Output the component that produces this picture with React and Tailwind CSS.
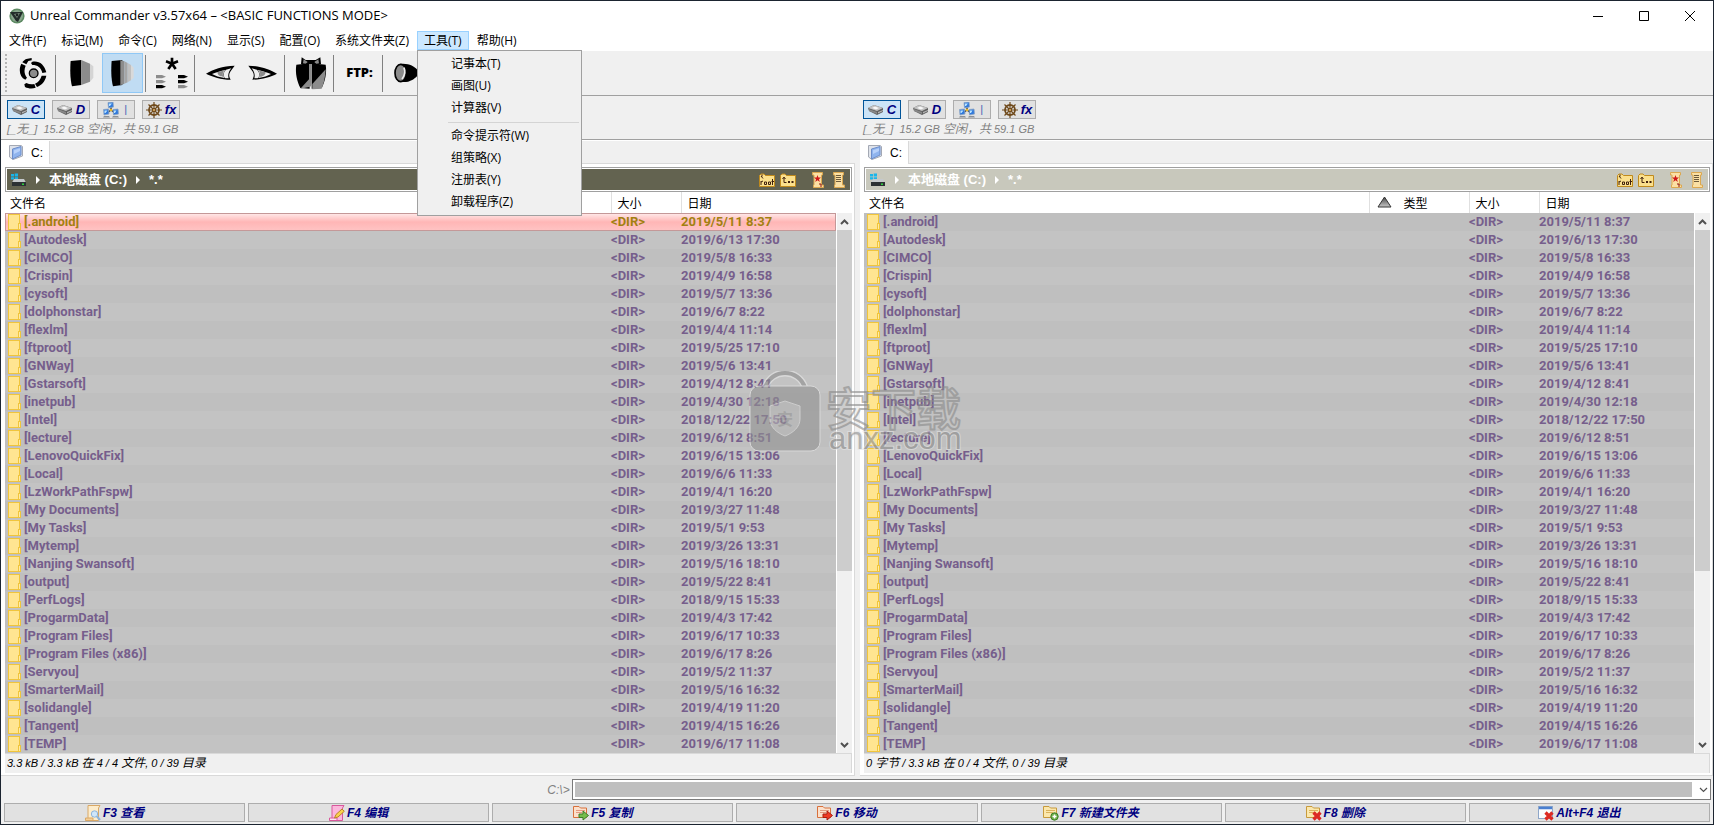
import React, { useState } from 'react';

const MENUS = ['文件(F)', '标记(M)', '命令(C)', '网络(N)', '显示(S)', '配置(O)', '系统文件夹(Z)', '工具(T)', '帮助(H)'];

const TOOL_ITEMS = ['记事本(T)', '画图(U)', '计算器(V)', '-', '命令提示符(W)', '组策略(X)', '注册表(Y)', '卸载程序(Z)'];

const FILES = [
  ['.android', '2019/5/11 8:37'],
  ['Autodesk', '2019/6/13 17:30'],
  ['CIMCO', '2019/5/8 16:33'],
  ['Crispin', '2019/4/9 16:58'],
  ['cysoft', '2019/5/7 13:36'],
  ['dolphonstar', '2019/6/7 8:22'],
  ['flexlm', '2019/4/4 11:14'],
  ['ftproot', '2019/5/25 17:10'],
  ['GNWay', '2019/5/6 13:41'],
  ['Gstarsoft', '2019/4/12 8:41'],
  ['inetpub', '2019/4/30 12:18'],
  ['Intel', '2018/12/22 17:50'],
  ['lecture', '2019/6/12 8:51'],
  ['LenovoQuickFix', '2019/6/15 13:06'],
  ['Local', '2019/6/6 11:33'],
  ['LzWorkPathFspw', '2019/4/1 16:20'],
  ['My Documents', '2019/3/27 11:48'],
  ['My Tasks', '2019/5/1 9:53'],
  ['Mytemp', '2019/3/26 13:31'],
  ['Nanjing Swansoft', '2019/5/16 18:10'],
  ['output', '2019/5/22 8:41'],
  ['PerfLogs', '2018/9/15 15:33'],
  ['ProgarmData', '2019/4/3 17:42'],
  ['Program Files', '2019/6/17 10:33'],
  ['Program Files (x86)', '2019/6/17 8:26'],
  ['Servyou', '2019/5/2 11:37'],
  ['SmarterMail', '2019/5/16 16:32'],
  ['solidangle', '2019/4/19 11:20'],
  ['Tangent', '2019/4/15 16:26'],
  ['TEMP', '2019/6/17 11:08'],
];

/* ---------- toolbar icons ---------- */

const ApertureIcon = () => (
  <svg width="28" height="32" viewBox="0 0 84 96">
    <path d="M22 6L38 3V10L28 12L22 22L10 16C13 12 17 8 22 6Z" />
    <path d="M7 20L20 26C14 40 16 52 24 62L19 68C2 60 -2 38 7 20Z" />
    <path d="M40 14C60 10 76 22 82 46L70 48C66 32 56 24 40 24L36 18Z" />
    <path d="M82 56C78 74 68 84 54 90L48 80C58 76 64 68 68 56Z" />
    <path d="M50 92C40 96 28 95 18 90L16 82L22 78C30 82 38 83 46 81Z" />
    <circle cx="44" cy="49" r="13" fill="#8c8c8c" stroke="#000" strokeWidth="4" />
  </svg>
);

const LensIcon = ({ striped }) => (
  <svg width="24" height="28" viewBox="0 0 72 84">
    <path d="M2 6L34 3V78L6 82C0 60 0 28 2 6Z" />
    {striped ? (
      <>
        <path d="M28 4L40 7V74L28 79Z" fill="#8c8c8c" />
        <path d="M40 7L50 12V70L40 74Z" fill="#a6a6a6" />
        <path d="M50 12L60 18V64L50 70Z" fill="#c0c0c0" />
        <path d="M60 18L68 26V56L60 64Z" fill="#d9d9d9" />
      </>
    ) : (
      <>
        <path d="M34 3L60 14V68L34 78Z" fill="#8c8c8c" />
        <path d="M60 14L70 22V56L60 68Z" fill="#d4d4d4" />
      </>
    )}
  </svg>
);

const SelectIcon = () => (
  <svg width="32" height="32" viewBox="0 0 96 96">
    <path d="M48 20V2M48 20L30 13M48 20L66 13M48 20L37 36M48 20L59 36" stroke="#000" strokeWidth="8" fill="none" />
    <path d="M0 54H18L30 59L18 64H0Z" fill="#8c8c8c" />
    <path d="M0 69H18L30 74L18 79H0Z" fill="#8c8c8c" />
    <path d="M0 84H18L30 89L18 94H0Z" />
    <path d="M66 54H84L96 59L84 64H66Z" />
    <path d="M66 69H84L96 74L84 79H66Z" />
    <path d="M66 84H84L96 89L84 94H66Z" fill="#8c8c8c" />
  </svg>
);

const EyeIcon = ({ flip }) => (
  <svg width="30" height="16" viewBox="0 0 90 48" className={flip ? '-scale-x-100' : ''}>
    <path d="M0 26C20 14 50 2 86 2L76 16C68 26 68 34 74 44C46 44 20 36 0 26Z" />
    <path d="M18 27C32 22 44 18 58 15C50 24 50 32 56 39C40 37 28 33 18 27Z" fill="#f0f0f0" />
    <path d="M34 22L56 16C48 24 50 32 54 36C44 36 36 32 34 22Z" fill="#8c8c8c" />
    <path d="M60 14L76 10C66 22 66 32 68 40H58C50 32 52 22 60 14Z" fill="#f0f0f0" />
  </svg>
);

const BeetleIcon = () => (
  <svg width="32" height="34" viewBox="0 0 96 102">
    <path d="M20 4L32 12H62L76 4L78 24H18Z" />
    <path d="M26 10L38 18L32 24L24 22ZM70 10L58 18L64 24L72 22Z" fill="#8c8c8c" />
    <path d="M4 26L42 22L44 98L16 96C6 76 0 50 4 26Z" />
    <path d="M50 22L92 26C96 50 90 76 80 96L50 98Z" />
    <path d="M92 40C90 66 86 84 80 98L52 100V84Z" fill="#8c8c8c" />
    <path d="M42 24L50 24V86L46 92L16 98L42 70Z" fill="#8c8c8c" />
  </svg>
);

const TorchIcon = () => (
  <svg width="30" height="20" viewBox="0 0 90 60">
    <path d="M18 3C44 0 60 10 70 20L86 22V38L70 38C58 52 42 60 18 56Z" />
    <ellipse cx="20" cy="30" rx="17" ry="26" fill="#8c8c8c" stroke="#000" strokeWidth="5" />
    <path d="M30 14C34 24 32 38 24 48" fill="none" stroke="#f0f0f0" strokeWidth="5" />
  </svg>
);

/* ---------- small icons ---------- */

const AppIcon = () => (
  <svg width="16" height="16" viewBox="0 0 16 16">
    <circle cx="8" cy="8" r="7.6" fill="#5d8a63" />
    <circle cx="8" cy="8" r="6" fill="#88a68c" />
    <path d="M1 4L14 4L9 14L7 13Z" fill="#222c2a" />
    <path d="M5 6L11 5L8 10Z" fill="#7d9180" />
    <circle cx="8" cy="7" r="1.4" fill="#1c2222" />
  </svg>
);

const DriveIcon = () => (
  <svg width="16" height="12" viewBox="0 0 16 12">
    <path d="M0 4L6 1L15 4V8L9 11L1 7Z" fill="#5f5f5f" />
    <path d="M0 4L6 1L15 4L9 7Z" fill="#c2c2c2" />
    <path d="M4 4L7 2.4L11 4L8 5.5Z" fill="#f8f8f8" />
    <path d="M1 5L9 8V10L1 7Z" fill="#888" />
    <path d="M10 8L15 6V7L10 9.4Z" fill="#b5b5b5" />
  </svg>
);

const NetworkIcon = () => (
  <svg width="16" height="16" viewBox="0 0 16 16">
    <path d="M8 5V9M8 8L4 11M8 8L12 11" stroke="#3a3a3a" strokeWidth="1.4" />
    <path d="M5 0.5L10 0L10.5 5L5.5 6Z" fill="#2f78dc" stroke="#8aa4c4" strokeWidth="0.8" />
    <path d="M0.5 7.5L5.5 7L6 12L1 13Z" fill="#2f78dc" stroke="#8aa4c4" strokeWidth="0.8" />
    <path d="M10 7.5L15 7L15.5 12L10.5 13Z" fill="#2f78dc" stroke="#8aa4c4" strokeWidth="0.8" />
    <path d="M6 1.5H9L7 4H6ZM1.5 8.5H4.5L2.5 11H1.5ZM11 8.5H13.5L12 11H11Z" fill="#b9e4ff" />
    <path d="M1 14H6L7 15.5H0ZM10 14H15L16 15.5H9Z" fill="#8b9096" />
    <circle cx="8" cy="8" r="1.3" fill="#e8b820" />
  </svg>
);

const WheelIcon = () => (
  <svg width="16" height="16" viewBox="0 0 16 16" fill="none" stroke="#6f4a1c">
    <path d="M8 0V16M0 8H16M2.5 2.5L13.5 13.5M13.5 2.5L2.5 13.5" strokeWidth="1.2" />
    <circle cx="8" cy="8" r="5" strokeWidth="1.8" />
    <circle cx="8" cy="8" r="1.6" fill="#d8a860" />
  </svg>
);

const TabFolderIcon = () => (
  <svg width="14" height="15" viewBox="0 0 14 15">
    <path d="M0.5 0.5H12L13.5 1.5V11L4 14.5L0.5 12Z" fill="#dfe3ea" stroke="#a4a9b4" />
    <path d="M3.5 4L12 1.5V10L3.5 14Z" fill="#8fb4ee" stroke="#6d8ecb" />
    <path d="M5 5.2L11 3.2V6L5 9Z" fill="#b7d1fa" />
  </svg>
);

const SystemDriveIcon = () => (
  <svg width="16" height="14" viewBox="0 0 16 14">
    <path d="M0 1H3V3.5H0ZM3.7 0.6H7V3.5H3.7ZM0 4.2H3V6.6H0ZM3.7 4.2H7V7H3.7Z" fill="#19b5ea" />
    <path d="M3 6H13L15 9.5H1Z" fill="#c5c9cc" />
    <rect x="1" y="9" width="14" height="4" fill="#2c3134" />
    <rect x="11" y="10.5" width="2" height="1.4" fill="#30e040" />
  </svg>
);

const RootFolderIcon = () => (
  <svg width="16" height="14" viewBox="0 0 16 14">
    <path d="M0.5 2.5L2 1H5L6.5 2.5H15.5V13.5H0.5Z" fill="#fbe08c" stroke="#c08a1c" />
    <path d="M3 1.5V3.5M2 8V12M2 9L4 8M5.5 9H7.5V11.5H5.5ZM9.5 9H11.5V11.5H9.5ZM13.5 6V12M12.5 8.5H15" fill="none" stroke="#40200c" />
    <path d="M2 3L4 5.5" stroke="#40200c" />
  </svg>
);

const UpFolderIcon = () => (
  <svg width="16" height="14" viewBox="0 0 16 14">
    <path d="M0.5 2.5L2 1H5L6.5 2.5H15.5V13.5H0.5Z" fill="#fbe08c" stroke="#c08a1c" />
    <path d="M4 4V9.5H6.5M2.5 6L4 4.2L5.5 6" fill="none" stroke="#40200c" />
    <path d="M8 8H10V10H8ZM11.5 8H13.5V10H11.5Z" fill="#40200c" />
  </svg>
);

const ScrollIcon = ({ star }) => (
  <svg width="12" height="16" viewBox="0 0 12 16">
    <path d="M0.5 0.5H10.5V3H9.5V13H11.5V15.5H1.5V13H2V3H0.5Z" fill="#fbe0a4" stroke="#dca850" />
    {star ? (
      <>
        <path d="M5.5 3L6.4 5.6H9L7 7.2L7.8 10L5.5 8.3L3.3 10L4 7.2L2 5.6H4.6Z" fill="#d01818" />
        <path d="M7 12H9V15" fill="none" stroke="#901010" />
      </>
    ) : (
      <path d="M3 3.5H8M3 5.5H8M3 7.5H8M3 9.5H8" stroke="#6d5a3a" />
    )}
  </svg>
);

const FolderIcon = () => (
  <svg width="13" height="16" viewBox="0 0 13 16" className="block">
    <rect x="0.5" y="0.5" width="11" height="15" fill="#ffe591" stroke="#f0c53c" />
    <rect x="10.5" y="9.5" width="2" height="6" fill="#ffeaa4" stroke="#f0c53c" />
  </svg>
);

const SortIcon = () => (
  <svg width="15" height="12" viewBox="0 0 15 12" className="mb-1">
    <defs>
      <linearGradient id="sort" x1="0" y1="0" x2="0" y2="1">
        <stop offset="0" stopColor="#444" />
        <stop offset="1" stopColor="#c8c8c8" />
      </linearGradient>
    </defs>
    <path d="M7.5 1L14 11H1Z" fill="url(#sort)" stroke="#333" />
  </svg>
);

const Chevron = ({ up, thin }) => (
  <svg width="9" height="6" viewBox="0 0 9 6" className={up ? 'rotate-180' : ''}>
    <path d="M1 1L4.5 4.5L8 1" fill="none" stroke="#505050" strokeWidth={thin ? 1.2 : 2} />
  </svg>
);

const KeyIcon = ({ kind }) => (
  <svg width="16" height="16" viewBox="0 0 16 16">
    {kind === 'view' && (
      <>
        <path d="M3 0.5H15L13.5 3V15.5H1L3 12.5Z" fill="#fdeccb" stroke="#d9a866" />
        <path d="M0.5 13H8V15.5H0.5Z" fill="#f4cf98" stroke="#d9a866" />
        <circle cx="9.5" cy="9" r="3.2" fill="#cfe6fa" stroke="#8db4dc" />
        <path d="M12 11.5L15 15" stroke="#8db4dc" strokeWidth="2" />
      </>
    )}
    {kind === 'edit' && (
      <>
        <path d="M3 0.5H15L13.5 3V15.5H1L3 12.5Z" fill="#fbb7dc" stroke="#d8589c" />
        <path d="M0.5 13H8V15.5H0.5Z" fill="#fde4f0" stroke="#d8589c" />
        <path d="M5.5 13L7 9.5L13 4L15.3 6.3L9 12Z" fill="#f9d24c" stroke="#b98424" />
      </>
    )}
    {(kind === 'copy' || kind === 'move') && (
      <>
        <path d="M0.5 1.5H6L7.5 3H13.5V12.5H0.5Z" fill="#fbe0cc" stroke="#d8703c" />
        <path d="M3 5.5H12M3 7.5H9" stroke="#e39a80" />
        <path
          d="M6 9H10V6L15.5 10.5L10 15V12.5H6Z"
          fill={kind === 'copy' ? '#74bd4c' : '#ee3a24'}
          stroke={kind === 'copy' ? '#3d7d28' : '#a81c10'}
        />
      </>
    )}
    {(kind === 'mkdir' || kind === 'delete') && (
      <>
        <path d="M0.5 1.5H6L7.5 3H13.5V12.5H0.5Z" fill="#fbe7ac" stroke="#c79a3c" />
        <path d="M3 5.5H12M3 7.5H10" stroke="#d9b25c" />
      </>
    )}
    {kind === 'mkdir' && (
      <>
        <circle cx="11.5" cy="11.5" r="3.7" fill="#6cae48" stroke="#3d7d28" />
        <path d="M11.5 9.5V13.5M9.5 11.5H13.5" stroke="#fff" strokeWidth="1.5" />
      </>
    )}
    {kind === 'exit' && (
      <>
        <rect x="0.5" y="1.5" width="14" height="12" fill="#fafcff" stroke="#8ea6c8" />
        <path d="M1 3H14" stroke="#4a7fd0" strokeWidth="2.5" />
      </>
    )}
    {(kind === 'delete' || kind === 'exit') && (
      <path d="M7.5 7.5L14.5 14.5M14.5 7.5L7.5 14.5" stroke="#dc2a24" strokeWidth="3.2" />
    )}
  </svg>
);

/* ---------- toolbar ---------- */

const ToolButton = ({ label, pressed, children }) => (
  <button
    type="button"
    aria-label={label}
    className={`flex h-10 w-[41px] shrink-0 items-center justify-center border ${
      pressed ? 'border-[#90c8f6] bg-[#c0dcf3]' : 'border-transparent'
    }`}
  >
    {children}
  </button>
);

const ToolSeparator = () => (
  <div className="w-2 shrink-0 pl-0.5">
    <div className="h-[37px] w-px bg-[#808080]" />
  </div>
);

const Toolbar = () => (
  <div className="flex h-[45px] items-center border-t border-white bg-[#f0f0f0] pl-1">
    <div className="mr-[5px] h-[38px] border-l-2 border-dotted border-[#b4b4b4]" />
    <ToolButton label="刷新"><ApertureIcon /></ToolButton>
    <ToolSeparator />
    <ToolButton label="简要"><LensIcon /></ToolButton>
    <ToolButton label="详细" pressed><LensIcon striped /></ToolButton>
    <ToolSeparator />
    <ToolButton label="选择"><SelectIcon /></ToolButton>
    <ToolSeparator />
    <ToolButton label="后退"><EyeIcon /></ToolButton>
    <ToolButton label="前进"><EyeIcon flip /></ToolButton>
    <ToolSeparator />
    <ToolButton label="打包"><BeetleIcon /></ToolButton>
    <ToolSeparator />
    <ToolButton label="FTP">
      <span className="font-['Open_Sans',sans-serif] text-[13px] font-extrabold">FTP:</span>
    </ToolButton>
    <ToolSeparator />
    <ToolButton label="搜索"><TorchIcon /></ToolButton>
  </div>
);

/* ---------- panes ---------- */

// Latin runs are set one size smaller than the Chinese ones
const MixedText = ({ text }) =>
  text.split(/([\u3000-\u9fff\uff00-\uffef]+)/).map((part, i) => (
    <span key={i} className={i % 2 ? 'text-xs' : 'text-[11px]'}>{part}</span>
  ));

const DriveButton = ({ label, active, children }) => (
  <button
    type="button"
    className={`flex h-[19px] w-[38px] items-center justify-center gap-[3px] border text-[13px] font-bold italic text-[#000080] ${
      active ? 'border-[#005499] bg-[#cce4f7]' : 'border-[#adadad] bg-[#e1e1e1]'
    }`}
  >
    {children}
    <span className={label === '|' ? 'w-2 text-[10px] font-normal text-[#3058b0]' : ''}>{label}</span>
  </button>
);

const DriveBar = () => (
  <div className="h-[43px] px-[6px] pt-1 pb-1">
    <div className="flex gap-[7px]">
      <DriveButton label="C" active><DriveIcon /></DriveButton>
      <DriveButton label="D"><DriveIcon /></DriveButton>
      <DriveButton label="|"><NetworkIcon /></DriveButton>
      <DriveButton label="fx"><WheelIcon /></DriveButton>
    </div>
    <p className="text-xs leading-5 whitespace-pre text-[#808080] italic">
      <MixedText text="[_无_]  15.2 GB 空闲，共 59.1 GB" />
    </p>
  </div>
);

const PathBar = ({ active }) => (
  <div className="border border-[#a0a0a0] bg-white p-px">
    <div className={`flex h-[21px] items-center pr-[5px] pl-1 text-[13px] font-bold text-white ${active ? 'bg-[#636350]' : 'bg-[#c8c8bc]'}`}>
      <SystemDriveIcon />
      <span className="ml-[9px] h-0 w-0 border-y-4 border-l-4 border-y-transparent border-l-white" />
      <span className="ml-[9px] whitespace-nowrap">本地磁盘 (C:)</span>
      <span className="ml-[9px] h-0 w-0 border-y-4 border-l-4 border-y-transparent border-l-white" />
      <span className="ml-[9px]">*.*</span>
      <div className="ml-auto flex items-center">
        <button type="button" aria-label="根目录"><RootFolderIcon /></button>
        <button type="button" aria-label="上级目录" className="ml-[5px]"><UpFolderIcon /></button>
        <button type="button" aria-label="收藏" className="ml-4"><ScrollIcon star /></button>
        <button type="button" aria-label="历史" className="ml-[9px]"><ScrollIcon /></button>
      </div>
    </div>
  </div>
);

const FileTable = ({ active }) => (
  <div className="flex flex-1">
    <table className="min-w-0 flex-1 table-fixed border-collapse text-left">
      <colgroup>
        <col />
        <col className="w-[100px]" />
        <col className="w-[70px]" />
        <col className="w-[155px]" />
      </colgroup>
      <thead className="bg-white text-xs text-black">
        <tr className="h-[21px] leading-[18px]">
          <th className="p-0 pt-[3px] pl-[5px] font-normal">文件名</th>
          <th className="border-l border-[#e0e0e0] p-0 pt-[3px] font-normal">
            <span className="flex items-center gap-3 pl-[7px]">
              <SortIcon />
              类型
            </span>
          </th>
          <th className="border-l border-[#e0e0e0] p-0 pt-[3px] pl-[6px] font-normal">大小</th>
          <th className="border-l border-[#e0e0e0] p-0 pt-[3px] pl-[6px] font-normal">日期</th>
        </tr>
      </thead>
      <tbody className="font-['Roboto','Liberation_Sans',sans-serif] text-[13px] font-bold text-[#765e8c]">
        {FILES.map(([name, date], i) => {
          const selected = active && i === 0;
          let look = i % 2 ? 'bg-[#c3c3c3]' : 'bg-[#bfbfbf]';
          if (selected) {
            look = 'bg-linear-to-b from-[#ffecec] via-[#ffb6b6] to-[#ffc4c4] text-[#a28010] outline -outline-offset-1 outline-[#c49898]';
          }
          return (
            <tr key={name} className={`h-[18px] leading-[16px] ${look}`}>
              <td className="p-0 pl-[3px]">
                <span className="flex items-center gap-[3px]">
                  <FolderIcon />
                  [{name}]
                </span>
              </td>
              <td className="p-0" />
              <td className="p-0">&lt;DIR&gt;</td>
              <td className="p-0">{date}</td>
            </tr>
          );
        })}
      </tbody>
    </table>
    <div className="flex w-4 flex-col">
      <div className="h-[21px] bg-white" />
      <div className="flex flex-1 flex-col items-center border-l border-white bg-[#f0f0f0]">
        <button type="button" aria-label="向上滚动" className="flex h-[17px] items-center"><Chevron up /></button>
        <div className="h-[341px] w-full bg-[#cdcdcd]" />
        <button type="button" aria-label="向下滚动" className="mt-auto flex h-[17px] items-center"><Chevron /></button>
      </div>
    </div>
  </div>
);

const Pane = ({ active, status }) => (
  <section className="flex min-w-0 flex-col">
    <div className="flex h-[23px] items-stretch">
      <button type="button" className="flex w-12 items-center gap-2 bg-white pl-2 text-xs">
        <TabFolderIcon />
        C:
      </button>
      <div className="flex-1 border-b border-l border-[#d9d9d9]" />
    </div>
    <div className="flex flex-1 flex-col border-r border-b border-[#d9d9d9] bg-white pt-[3px] pr-0.5 pb-0.5 pl-1">
      <PathBar active={active} />
      <FileTable active={active} />
      <p className="h-5 border-t border-r border-[#d9d9d9] bg-[#f0f0f0] pl-0.5 text-xs leading-[18px] text-black italic">
        <MixedText text={status} />
      </p>
    </div>
  </section>
);

/* ---------- menu ---------- */

const MenuBar = ({ open, setOpen }) => (
  <nav className="flex h-[19px] gap-px bg-white pl-px font-['Open_Sans','Noto_Sans_CJK_SC',sans-serif] text-xs">
    {MENUS.map((title) => (
      <div key={title} className="relative">
        <button
          type="button"
          onClick={() => setOpen(open === title ? null : title)}
          className={`flex h-[19px] items-center border px-1.5 whitespace-nowrap ${
            open === title ? 'border-[#99d1ff] bg-[#cce8ff]' : 'border-transparent'
          }`}
        >
          {title}
        </button>
        {open === title && title === '工具(T)' && (
          <div className="absolute top-[19px] left-0 z-20 w-[165px] border border-[#a0a0a0] bg-[#f0f0f0] py-0.5">
            {TOOL_ITEMS.map((item) =>
              item === '-' ? (
                <div key={item} className="mr-0.5 ml-[30px] flex h-1.5 items-center">
                  <div className="h-px w-full bg-[#d4d4d4]" />
                </div>
              ) : (
                <button key={item} type="button" className="block h-[22px] w-full pl-[33px] text-left">
                  {item}
                </button>
              )
            )}
          </div>
        )}
      </div>
    ))}
  </nav>
);

const KEYS = [
  ['view', 'F3 查看'],
  ['edit', 'F4 编辑'],
  ['copy', 'F5 复制'],
  ['move', 'F6 移动'],
  ['mkdir', 'F7 新建文件夹'],
  ['delete', 'F8 删除'],
  ['exit', 'Alt+F4 退出'],
];

const Watermark = () => (
  <svg
    width="220"
    height="84"
    viewBox="0 0 220 84"
    className="pointer-events-none absolute top-[370px] left-[747px] z-10 opacity-60"
  >
    <path d="M17 17C23 -3 51 -3 57 17" fill="none" stroke="#e8e8e8" strokeWidth="7" />
    <path d="M17 17C23 -3 51 -3 57 17" fill="none" stroke="#8e8e8e" strokeWidth="4" />
    <rect x="2" y="15" width="70" height="65" rx="9" fill="#919191" stroke="#e8e8e8" />
    <path d="M37 30L52 35V48C52 56 45 62 37 65C29 62 22 56 22 48V35Z" fill="#b4b4b4" stroke="#d6d6d6" />
    <text x="37" y="54" textAnchor="middle" fontSize="16" fontWeight="700" fill="#919191">安</text>
    <text
      x="78"
      y="55"
      fontSize="45"
      fontWeight="500"
      fill="none"
      stroke="#8a8a8a"
      strokeWidth="2"
      strokeLinejoin="round"
    >
      安下载
    </text>
    <text x="81" y="78" fontSize="31" fill="#8a8a8a" stroke="#e4e4e4" strokeWidth="2" className="[paint-order:stroke]">
      anxz.com
    </text>
  </svg>
);

const App = () => {
  const [openMenu, setOpenMenu] = useState('工具(T)');

  return (
    <div className="relative flex min-h-screen flex-col border border-[#1b2430] bg-[#f0f0f0] font-['Liberation_Sans','Noto_Sans_CJK_SC',sans-serif] text-black">
      <header className="flex h-[30px] items-center bg-white pl-2">
        <AppIcon />
        <h1 className="ml-[5px] font-['Open_Sans',sans-serif] text-[13px]">Unreal Commander v3.57x64 – &lt;BASIC FUNCTIONS MODE&gt;</h1>
        <div className="ml-auto flex h-full">
          <button type="button" aria-label="最小化" className="flex w-[46px] items-center justify-center">
            <svg width="10" height="10" viewBox="0 0 10 10"><path d="M0 5.5H10" stroke="#000" /></svg>
          </button>
          <button type="button" aria-label="最大化" className="flex w-[46px] items-center justify-center">
            <svg width="10" height="10" viewBox="0 0 10 10"><path d="M0.5 0.5H9.5V9.5H0.5Z" fill="none" stroke="#000" /></svg>
          </button>
          <button type="button" aria-label="关闭" className="flex w-[46px] items-center justify-center">
            <svg width="10" height="10" viewBox="0 0 10 10"><path d="M0 0L10 10M10 0L0 10" stroke="#000" /></svg>
          </button>
        </div>
      </header>

      <MenuBar open={openMenu} setOpen={setOpenMenu} />
      <Toolbar />

      <div className="grid grid-cols-2 border-y border-[#a0a0a0]">
        <DriveBar />
        <DriveBar />
      </div>

      <main className="grid flex-1 grid-cols-[854fr_5px_853fr] border-t border-white">
        <Pane active status="3.3 kB / 3.3 kB 在 4 / 4 文件, 0 / 39 目录" />
        <div />
        <Pane status="0 字节 / 3.3 kB 在 0 / 4 文件, 0 / 39 目录" />
      </main>

      <div className="flex items-center py-[3px] pr-0.5 pl-px">
        <label htmlFor="cmd" className="w-1/3 pr-0.5 text-right text-xs text-[#808080] italic">C:\&gt;</label>
        <div className="flex h-[21px] flex-1 items-center border border-[#7a7a7a] bg-white p-0.5">
          <input id="cmd" type="text" className="h-[15px] min-w-0 flex-1 bg-[#bfbfbf] px-1 text-xs outline-none" />
          <button type="button" aria-label="历史命令" className="flex w-4 items-center justify-end"><Chevron thin /></button>
        </div>
      </div>

      <footer className="grid grid-cols-7 gap-[3px] px-[3px] pb-0.5">
        {KEYS.map(([kind, label]) => (
          <button
            key={kind}
            type="button"
            className="flex h-[19px] items-center justify-center gap-0.5 border border-[#adadad] bg-[#e1e1e1] pr-5 text-xs font-bold whitespace-nowrap text-[#000080] italic"
          >
            <KeyIcon kind={kind} />
            {label}
          </button>
        ))}
      </footer>

      <Watermark />
    </div>
  );
};

export default App;
